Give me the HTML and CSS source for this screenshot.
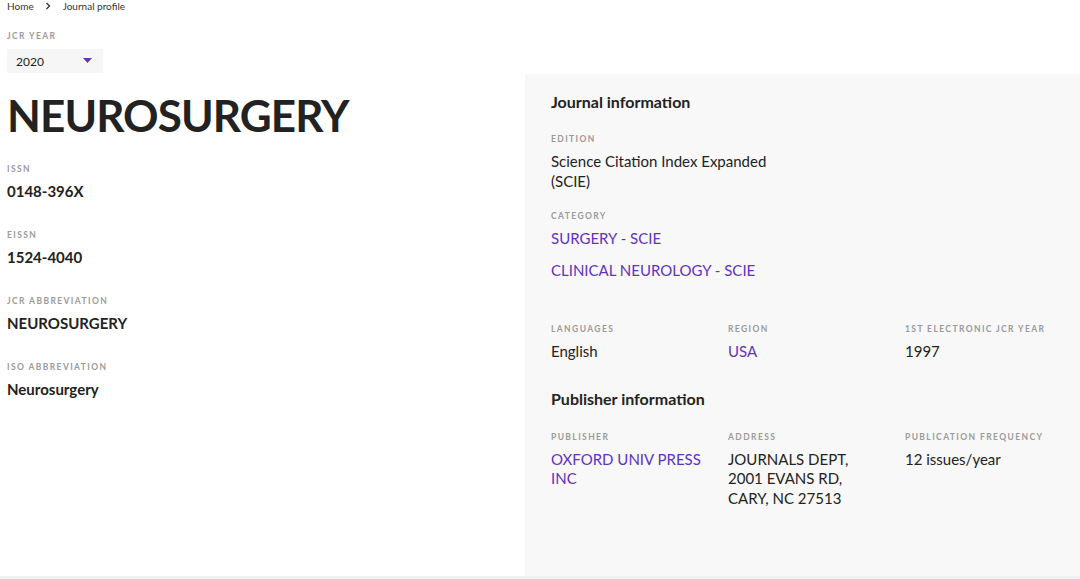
FILE: index.html
```html
<!DOCTYPE html>
<html lang="en">
<head>
<meta charset="utf-8">
<title>Journal profile</title>
<link rel="stylesheet" href="styles.css">
</head>
<body>
<div class="top">
  <nav class="crumbs"><span>Home</span><svg class="chev" width="29" height="8" viewBox="0 0 29 8"><path d="M12.5 1L15.5 4L12.5 7" fill="none" stroke="#333" stroke-width="1.3"/></svg><span>Journal profile</span></nav>
  <div class="label year-label">JCR YEAR</div>
  <div class="select"><span>2020</span><svg class="caret" width="9" height="5" viewBox="0 0 9 5"><path d="M0 0H9L4.5 5Z" fill="#5e33bf"/></svg></div>
</div>
<div class="main">
  <section class="left">
    <h1 class="title">NEUROSURGERY</h1>
    <div class="field"><div class="label">ISSN</div><div class="val-strong">0148-396X</div></div>
    <div class="field"><div class="label">EISSN</div><div class="val-strong">1524-4040</div></div>
    <div class="field"><div class="label">JCR ABBREVIATION</div><div class="val-strong">NEUROSURGERY</div></div>
    <div class="field"><div class="label">ISO ABBREVIATION</div><div class="val-strong">Neurosurgery</div></div>
  </section>
  <section class="panel">
    <h2 class="heading">Journal information</h2>
    <div class="block edition"><div class="label">EDITION</div><div class="val">Science Citation Index Expanded<br>(SCIE)</div></div>
    <div class="block category"><div class="label">CATEGORY</div>
      <div class="val link">SURGERY - SCIE</div>
      <div class="val link cat2">CLINICAL NEUROLOGY - SCIE</div>
    </div>
    <div class="cols lang-row">
      <div><div class="label">LANGUAGES</div><div class="val">English</div></div>
      <div><div class="label">REGION</div><div class="val link">USA</div></div>
      <div><div class="label">1ST ELECTRONIC JCR YEAR</div><div class="val">1997</div></div>
    </div>
    <h2 class="heading pub">Publisher information</h2>
    <div class="cols pub-row">
      <div><div class="label">PUBLISHER</div><div class="val link">OXFORD UNIV PRESS<br>INC</div></div>
      <div><div class="label">ADDRESS</div><div class="val">JOURNALS DEPT,<br>2001 EVANS RD,<br>CARY, NC 27513</div></div>
      <div><div class="label">PUBLICATION FREQUENCY</div><div class="val">12 issues/year</div></div>
    </div>
  </section>
</div>
<div class="foot"></div>
</body>
</html>
```
FILE: styles.css
```css
* { box-sizing: border-box; }
html, body { margin: 0; padding: 0; background: #fff; }
body {
  font-family: "Lato", "Noto Sans", sans-serif;
  color: #222;
  width: 1080px;
  height: 579px;
  overflow: hidden;
}
.top { height: 74px; padding: 0 7px; }
.crumbs {
  font-size: 10px;
  line-height: 12px;
  padding-top: 0;
  color: #333;
  display: flex;
  align-items: center;
}
.crumbs .chev { display: block; }
.label {
  font-size: 8.5px;
  font-weight: 700;
  letter-spacing: 1.4px;
  color: #9a9a9a;
  line-height: 10px;
  text-transform: uppercase;
}
.year-label { margin-top: 19px; }
.select {
  margin-top: 8px;
  width: 96px;
  height: 24px;
  background: #f6f6f6;
  display: flex;
  align-items: center;
  justify-content: space-between;
  padding: 0 11px 0 9px;
  font-size: 12px;
  color: #222;
}
.caret { margin-top: -2px; }
.main { display: flex; height: 502px; }
.left { width: 525px; padding: 16px 7px 0; }
.title {
  margin: 0;
  font-size: 44px;
  font-weight: 700;
  line-height: 50px;
  color: #222;
  letter-spacing: -0.9px;
}
.field { height: 66px; }
.left .title + .field { margin-top: 24px; }
.val-strong { font-size: 15px; font-weight: 700; line-height: 20px; margin-top: 7px; color: #222; }
.panel {
  flex: 1;
  background: #f8f8f8;
  padding: 18px 26px 0;
}
.heading { margin: 0; font-size: 16px; font-weight: 700; line-height: 20px; color: #222; }
.val { font-size: 15px; line-height: 19.5px; color: #222; margin-top: 8px; }
.link { color: #5e33bf; }
.block.edition { margin-top: 22px; }
.block.category { margin-top: 20px; }
.cat2 { margin-top: 12px; }
.cols { display: grid; grid-template-columns: 177px 177px 1fr; }
.lang-row { margin-top: 44px; }
.pub { margin-top: 27px; }
.pub-row { margin-top: 23px; }
.foot { height: 3px; background: #f0f0f0; }
```
